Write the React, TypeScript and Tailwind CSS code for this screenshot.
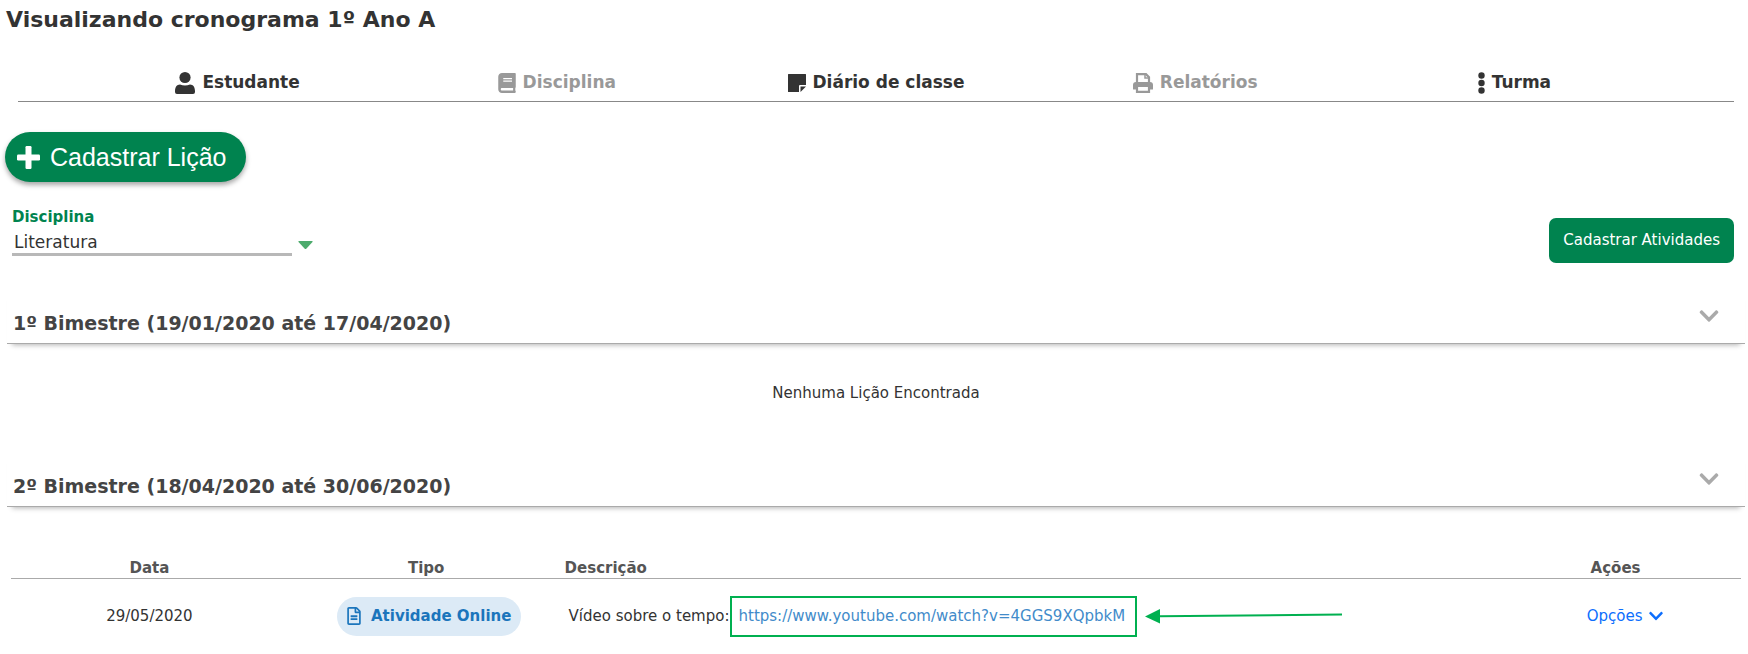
import type { ReactNode } from "react";
import { FaBook, FaChevronDown, FaRegFileAlt } from "react-icons/fa";

type MenuItem = {
  label: string;
  icon: ReactNode;
  disabled?: boolean;
};

type Lesson = {
  date: string;
  type: string;
  description: string;
  url: string;
};

type Term = {
  title: string;
  lessons: Lesson[];
};

function PersonIcon() {
  return (
    <svg width="20" height="22" viewBox="0 0 20 22" fill="currentColor" aria-hidden="true">
      <ellipse cx="10" cy="5.5" rx="5.6" ry="5.5" />
      <path d="M0 19 C0 15 1.800 12.500 5 12.400 C8.200 13.900 11.800 13.900 15 12.400 C18.200 12.500 20 15 20 19 V20 Q20 22 18 22 H2 Q0 22 0 20 Z" />
    </svg>
  );
}

function NoteIcon() {
  return (
    <svg width="18" height="18" viewBox="0 0 18 18" fill="currentColor" aria-hidden="true">
      <path d="M0.500 0 H17.500 Q18 0 18 0.500 V11 H12 Q11 11 11 12 V18 H0.500 Q0 18 0 17.500 V0.500 Q0 0 0.500 0 Z" />
      <path d="M12.500 12.500 H18 L12.500 18 Z" />
    </svg>
  );
}

function PrinterIcon() {
  return (
    <svg width="20" height="20" viewBox="0 0 20 20" aria-hidden="true">
      <path d="M4 10 V1.200 H13 L16 4.200 V10" fill="none" stroke="currentColor" strokeWidth="2.2" />
      <path d="M12 1 V5 H16" fill="none" stroke="currentColor" strokeWidth="1.5" />
      <path
        d="M3 9 H17 Q20 9 20 12 V16 Q20 16.500 19.500 16.500 H0.500 Q0 16.500 0 16 V12 Q0 9 3 9 Z"
        fill="currentColor"
      />
      <path d="M4 13 H16 V18.900 H4 Z" fill="#fff" stroke="currentColor" strokeWidth="2.2" />
    </svg>
  );
}

function DotsIcon() {
  return (
    <svg width="7" height="22" viewBox="0 0 7 22" fill="currentColor" aria-hidden="true">
      <circle cx="3.5" cy="3.5" r="3.2" />
      <circle cx="3.5" cy="11" r="3.2" />
      <circle cx="3.5" cy="18.5" r="3.2" />
    </svg>
  );
}

function PlusIcon() {
  return (
    <svg width="23" height="23" viewBox="0 0 23 23" fill="currentColor" aria-hidden="true">
      <rect x="8.5" width="6" height="23" rx="1.2" />
      <rect y="8.5" width="23" height="6" rx="1.2" />
    </svg>
  );
}

function PointerArrow() {
  return (
    <svg width="198" height="16" viewBox="0 0 198 16" className="ml-2 shrink-0" aria-hidden="true">
      <path d="M0 8.500 L15 1 V15.500 Z" fill="#00b050" />
      <path d="M14 8.200 L197 6.500" stroke="#00b050" strokeWidth="2" />
    </svg>
  );
}

const menu: MenuItem[] = [
  { label: "Estudante", icon: <PersonIcon /> },
  { label: "Disciplina", icon: <FaBook className="h-5 w-[18px]" />, disabled: true },
  { label: "Diário de classe", icon: <NoteIcon /> },
  { label: "Relatórios", icon: <PrinterIcon />, disabled: true },
  { label: "Turma", icon: <DotsIcon /> },
];

const terms: Term[] = [
  { title: "1º Bimestre (19/01/2020 até 17/04/2020)", lessons: [] },
  {
    title: "2º Bimestre (18/04/2020 até 30/06/2020)",
    lessons: [
      {
        date: "29/05/2020",
        type: "Atividade Online",
        description: "Vídeo sobre o tempo:",
        url: "https://www.youtube.com/watch?v=4GGS9XQpbkM",
      },
    ],
  },
];

function Menu() {
  return (
    <nav className="mr-3.5 ml-[18px] grid grid-cols-5 border-b border-[#888] px-[60px]">
      {menu.map(({ label, icon, disabled }) => (
        <button
          key={label}
          type="button"
          disabled={disabled}
          className="flex h-9 items-center justify-center gap-[7px] text-[17px] font-bold text-[#333] disabled:text-[#999]"
        >
          {icon}
          {label}
        </button>
      ))}
    </nav>
  );
}

function LessonTable({ lessons }: { lessons: Lesson[] }) {
  return (
    <table className="w-full table-fixed border-collapse text-[15px]">
      <thead className="border-b border-[#aaa] leading-5 text-[#555]">
        <tr>
          <th className="w-[16%] p-0">Data</th>
          <th className="w-[16%] p-0">Tipo</th>
          <th className="p-0 text-left">Descrição</th>
          <th className="w-[14.5%] p-0">Ações</th>
        </tr>
      </thead>
      <tbody>
        {lessons.map((lesson) => (
          <tr key={lesson.url} className="h-[75px]">
            <td className="p-0 text-center">{lesson.date}</td>
            <td className="p-0 pl-1.5">
              <span className="mx-auto flex h-[39px] w-[184px] items-center justify-center gap-2.5 rounded-full bg-[#dceaf6] font-bold text-[#1b75bc]">
                <FaRegFileAlt className="h-[18px] w-3.5" />
                {lesson.type}
              </span>
            </td>
            <td className="p-0 pl-1">
              <div className="flex items-center whitespace-nowrap">
                {lesson.description}
                <a
                  href={lesson.url}
                  className="border-2 border-[#00b050] py-2 pr-2.5 pl-[7px] leading-[21px] text-[#428bca]"
                >
                  {lesson.url}
                </a>
                <PointerArrow />
              </div>
            </td>
            <td className="p-0 pl-5 text-center">
              <button type="button" className="inline-flex items-center gap-1.5 text-[#0d6efd]">
                Opções
                <FaChevronDown className="size-4" />
              </button>
            </td>
          </tr>
        ))}
      </tbody>
    </table>
  );
}

function TermSection({ term }: { term: Term }) {
  return (
    <section>
      <button
        type="button"
        className="flex h-14 w-full items-start justify-between border-b border-[#aaa] pr-[25px] pl-1.5 text-left shadow-[0_6px_5px_-5px_rgba(0,0,0,0.3)]"
      >
        <span className="pt-[23px] text-[19px] leading-6 font-bold text-[#444]">{term.title}</span>
        <FaChevronDown className="mt-[17px] size-[22px] text-[#aaa]" />
      </button>
      {term.lessons.length === 0 ? (
        <p className="pt-[37px] pb-[46px] text-center text-[15px] leading-6">
          Nenhuma Lição Encontrada
        </p>
      ) : (
        <div className="px-1 pt-[51px]">
          <LessonTable lessons={term.lessons} />
        </div>
      )}
    </section>
  );
}

export default function App() {
  return (
    <main className="bg-white font-['DejaVu_Sans',sans-serif] text-[#333]">
      <h1 className="pt-1.5 pb-[31px] pl-1.5 text-[22px] leading-7 font-bold">
        Visualizando cronograma 1º Ano A
      </h1>
      <Menu />

      <button
        type="button"
        className="mt-[30px] ml-[5px] flex h-[50px] items-center gap-2.5 rounded-full bg-[#00834f] pr-5 pl-3 font-['Liberation_Sans',sans-serif] text-[25px] text-white shadow-[0_3px_5px_rgba(0,0,0,0.35)]"
      >
        <PlusIcon />
        <span className="pt-0.5">Cadastrar Lição</span>
      </button>

      <div className="mt-6 mr-3.5 ml-3 flex items-start justify-between">
        <div>
          <label htmlFor="subject" className="block text-[15px] leading-[22px] font-bold text-[#00834f]">
            Disciplina
          </label>
          <div className="flex items-center gap-1.5">
            <select
              id="subject"
              className="h-7 w-[280px] appearance-none border-b-[3px] border-[#b8b8b8] bg-white pt-0.5 pl-0.5 text-[17px]"
            >
              <option>Literatura</option>
            </select>
            <svg width="15" height="8" viewBox="0 0 15 8" className="mt-1.5" aria-hidden="true">
              <path d="M1 0 H14 Q15 0 14.500 1 L8 8 H7 L0.500 1 Q0 0 1 0 Z" fill="#4dab6d" />
            </svg>
          </div>
        </div>
        <button
          type="button"
          className="mt-3 h-[45px] rounded-[7px] bg-[#00834f] px-3.5 text-[15px] text-white"
        >
          Cadastrar Atividades
        </button>
      </div>

      <div className="mt-[25px] mr-[3px] ml-[7px]">
        {terms.map((term) => (
          <TermSection key={term.title} term={term} />
        ))}
      </div>
    </main>
  );
}
